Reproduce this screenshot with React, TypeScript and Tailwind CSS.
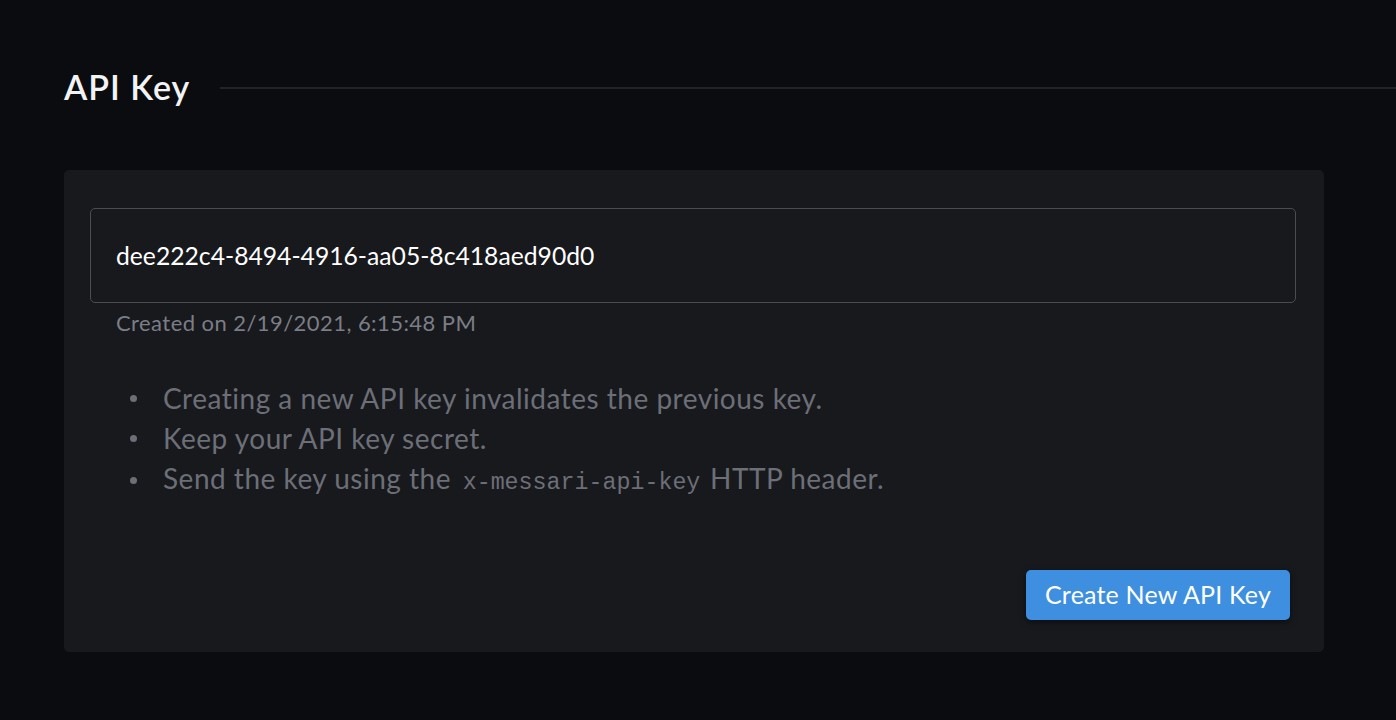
import React from "react";

const items: React.ReactNode[] = [
  "Creating a new API key invalidates the previous key.",
  "Keep your API key secret.",
  <>
    Send the key using the{" "}
    <code className="ml-[4px] mr-[2px] font-['Liberation_Mono',monospace] text-[23.3px] tracking-normal">x-messari-api-key</code> HTTP header.
  </>,
];

export default function App() {
  return (
    <div className="min-h-[720px] w-full bg-[#0b0c0f] pt-[63px] pb-[68px] font-['Lato','Noto_Sans',sans-serif]">
      <div className="flex items-center pl-[64px]">
        <h1 className="text-[34px] font-semibold leading-[48px] tracking-[1px] text-[#f2f3f5]">API Key</h1>
        <div className="ml-[30px] mt-[2px] h-[2px] flex-1 bg-[#222327]" />
      </div>
      <div className="mx-[64px] mt-[59px] w-[1260px] rounded-[5px] bg-[#18191d] pt-[38px] pr-[28px] pb-[32px] pl-[26px]">
        <div className="flex h-[95px] items-center rounded-[5px] border border-[#4b4c51] px-[25px] text-[24.7px] text-white">
          dee222c4-8494-4916-aa05-8c418aed90d0
        </div>
        <div className="mt-[6px] pl-[26px] text-[22px] leading-[28px] tracking-[0.44px] text-[#7b7e86]">
          Created on 2/19/2021, 6:15:48 PM
        </div>
        <ul className="mt-[41px] flex flex-col text-[28px] leading-[40px] tracking-[0.5px] text-[#6c6f77]">
          {items.map((it, i) => (
            <li key={i} className="flex items-center">
              <span className="ml-[40px] mr-[26px] h-[7px] w-[7px] shrink-0 rounded-full bg-[#6c6f77]" />
              <span>{it}</span>
            </li>
          ))}
        </ul>
        <div className="mt-[67px] flex justify-end pr-[6px]">
          <button className="h-[50px] rounded-[5px] bg-[#3e8fe0] px-[19px] text-[25px] tracking-[0.2px] text-white shadow-[0_2px_6px_rgba(0,0,0,0.5)]">
            Create New API Key
          </button>
        </div>
      </div>
    </div>
  );
}
